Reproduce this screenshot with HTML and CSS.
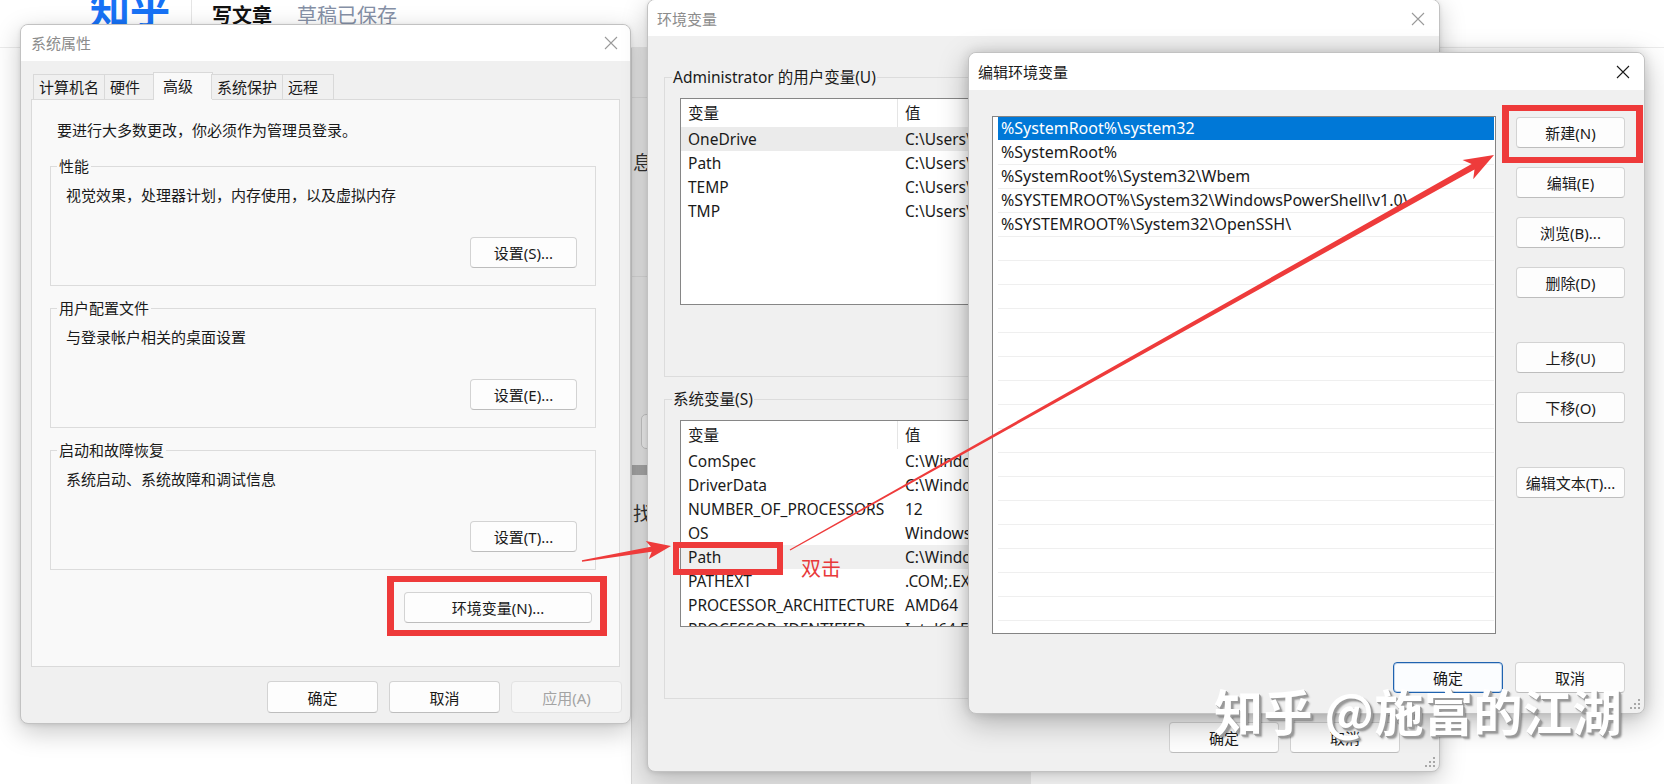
FILE: index.html
```html
<!DOCTYPE html>
<html lang="zh-CN">
<head>
<meta charset="utf-8">
<title>环境变量</title>
<link rel="stylesheet" href="styles.css">
</head>
<body>
<div class="zh-page">
  <header class="zh-header">
    <span class="zh-logo">知乎</span>
    <span class="zh-sep"></span>
    <span class="zh-title">写文章</span>
    <span class="zh-draft">草稿已保存</span>
  </header>
  <div class="zh-main">
    <div class="zh-side">
      <div class="zh-s1"></div>
      <div class="zh-s2">息</div>
      <div class="zh-s3"></div>
      <div class="zh-s4"></div>
      <div class="zh-s5"></div>
      <div class="zh-s6">找</div>
    </div>
  </div>
</div>

<section class="win win-sys">
  <div class="titlebar tb-sys">
    <span class="wt wt-off">系统属性</span>
    <svg class="xicon xicon-off" width="14" height="14" viewBox="0 0 14 14"><path d="M1 1L13 13M13 1L1 13" stroke="currentColor" stroke-width="1.1" fill="none"/></svg>
  </div>
  <div class="sys-body">
    <div class="tabs">
      <div class="tab tab-1">计算机名</div>
      <div class="tab">硬件</div>
      <div class="tab tab-on">高级</div>
      <div class="tab tab-4">系统保护</div>
      <div class="tab">远程</div>
    </div>
    <div class="tabpanel">
      <p class="intro">要进行大多数更改，你必须作为管理员登录。</p>
      <fieldset class="grp grp-first">
        <legend>性能</legend>
        <p class="grp-desc">视觉效果，处理器计划，内存使用，以及虚拟内存</p>
        <div class="grp-act"><button class="btn btn-set">设置(S)...</button></div>
      </fieldset>
      <fieldset class="grp">
        <legend>用户配置文件</legend>
        <p class="grp-desc">与登录帐户相关的桌面设置</p>
        <div class="grp-act"><button class="btn btn-set">设置(E)...</button></div>
      </fieldset>
      <fieldset class="grp">
        <legend>启动和故障恢复</legend>
        <p class="grp-desc">系统启动、系统故障和调试信息</p>
        <div class="grp-act"><button class="btn btn-set">设置(T)...</button></div>
      </fieldset>
      <div class="env-row"><button class="btn btn-env">环境变量(N)...</button></div>
    </div>
    <div class="sys-foot">
      <button class="btn btn-foot">确定</button>
      <button class="btn btn-foot">取消</button>
      <button class="btn btn-foot btn-dis">应用(A)</button>
    </div>
  </div>
</section>

<section class="win win-env">
  <div class="titlebar tb-env">
    <span class="wt wt-off">环境变量</span>
    <svg class="xicon xicon-off" width="14" height="14" viewBox="0 0 14 14"><path d="M1 1L13 13M13 1L1 13" stroke="currentColor" stroke-width="1.1" fill="none"/></svg>
  </div>
  <div class="env-body">
    <fieldset class="egrp">
      <legend>Administrator 的用户变量(U)</legend>
      <div class="lv">
        <div class="lv-head"><span>变量</span><span>值</span></div>
        <div class="lv-row lv-hl"><span>OneDrive</span><span>C:\Users\Administrator\OneDrive</span></div>
        <div class="lv-row"><span>Path</span><span>C:\Users\Administrator\AppData\Local\Microsoft\WindowsApps;</span></div>
        <div class="lv-row"><span>TEMP</span><span>C:\Users\Administrator\AppData\Local\Temp</span></div>
        <div class="lv-row"><span>TMP</span><span>C:\Users\Administrator\AppData\Local\Temp</span></div>
      </div>
    </fieldset>
    <fieldset class="egrp egrp-2">
      <legend>系统变量(S)</legend>
      <div class="lv">
        <div class="lv-head"><span>变量</span><span>值</span></div>
        <div class="lv-row"><span>ComSpec</span><span>C:\Windows\system32\cmd.exe</span></div>
        <div class="lv-row"><span>DriverData</span><span>C:\Windows\System32\Drivers\DriverData</span></div>
        <div class="lv-row"><span>NUMBER_OF_PROCESSORS</span><span>12</span></div>
        <div class="lv-row"><span>OS</span><span>Windows_NT</span></div>
        <div class="lv-row lv-hl2"><span>Path</span><span>C:\Windows\system32;C:\Windows;</span></div>
        <div class="lv-row"><span>PATHEXT</span><span>.COM;.EXE;.BAT;.CMD;.VBS</span></div>
        <div class="lv-row"><span>PROCESSOR_ARCHITECTURE</span><span>AMD64</span></div>
        <div class="lv-row"><span>PROCESSOR_IDENTIFIER</span><span>Intel64 Family 6 Model 151</span></div>
      </div>
    </fieldset>
    <div class="env-foot">
      <button class="btn btn-ef">确定</button>
      <button class="btn btn-ef">取消</button>
    </div>
  </div>
  <svg class="grip" width="10" height="10" viewBox="0 0 10 10"><g fill="#a8a8a8"><rect x="8" y="0" width="2" height="2"/><rect x="4" y="4" width="2" height="2"/><rect x="8" y="4" width="2" height="2"/><rect x="0" y="8" width="2" height="2"/><rect x="4" y="8" width="2" height="2"/><rect x="8" y="8" width="2" height="2"/></g></svg>
</section>

<section class="win win-edit">
  <div class="titlebar tb-edit">
    <span class="wt">编辑环境变量</span>
    <svg class="xicon" width="14" height="14" viewBox="0 0 14 14"><path d="M1 1L13 13M13 1L1 13" stroke="currentColor" stroke-width="1.1" fill="none"/></svg>
  </div>
  <div class="edit-body">
    <div class="edit-main">
      <div class="pl">
        <div class="pl-item pl-sel">%SystemRoot%\system32</div>
        <div class="pl-item">%SystemRoot%</div>
        <div class="pl-item">%SystemRoot%\System32\Wbem</div>
        <div class="pl-item">%SYSTEMROOT%\System32\WindowsPowerShell\v1.0\</div>
        <div class="pl-item">%SYSTEMROOT%\System32\OpenSSH\</div>
        <div class="pl-item"></div><div class="pl-item"></div><div class="pl-item"></div>
        <div class="pl-item"></div><div class="pl-item"></div><div class="pl-item"></div>
        <div class="pl-item"></div><div class="pl-item"></div><div class="pl-item"></div>
        <div class="pl-item"></div><div class="pl-item"></div><div class="pl-item"></div>
        <div class="pl-item"></div><div class="pl-item"></div><div class="pl-item"></div>
        <div class="pl-item"></div><div class="pl-item"></div>
      </div>
      <div class="edit-btns">
        <button class="btn btn-side">新建(N)</button>
        <button class="btn btn-side">编辑(E)</button>
        <button class="btn btn-side">浏览(B)...</button>
        <button class="btn btn-side">删除(D)</button>
        <button class="btn btn-side btn-gap">上移(U)</button>
        <button class="btn btn-side">下移(O)</button>
        <button class="btn btn-side btn-gap">编辑文本(T)...</button>
      </div>
    </div>
    <div class="edit-foot">
      <button class="btn btn-xf btn-default">确定</button>
      <button class="btn btn-xf">取消</button>
    </div>
  </div>
  <svg class="grip" width="10" height="10" viewBox="0 0 10 10"><g fill="#a8a8a8"><rect x="8" y="0" width="2" height="2"/><rect x="4" y="4" width="2" height="2"/><rect x="8" y="4" width="2" height="2"/><rect x="0" y="8" width="2" height="2"/><rect x="4" y="8" width="2" height="2"/><rect x="8" y="8" width="2" height="2"/></g></svg>
</section>

<svg class="annot" width="1664" height="784" viewBox="0 0 1664 784">
  <polygon fill="#ee3b3b" points="581.9,560.3 650.9,546.8 645.8,541.1 671,546 648.8,558.9 651.7,551.8 582.1,561.7"/>
  <polygon fill="#ee3b3b" points="789.7,549.5 1471.6,164.1 1462.5,160.1 1494,155 1473.2,179.3 1474.5,169.4 790.3,550.5"/>
</svg>
<div class="mark mark-env"></div>
<div class="mark mark-path"></div>
<div class="mark mark-new"></div>
<div class="dbl">双击</div>
<div class="watermark">知乎 @施富的江湖</div>
</body>
</html>
```

FILE: styles.css
```css
* { box-sizing: border-box; }
html, body { margin: 0; padding: 0; }
body {
  width: 1664px;
  height: 784px;
  overflow: hidden;
  position: relative;
  background: #ffffff;
  font-family: "Noto Sans", "Noto Sans CJK SC", sans-serif;
  color: #1a1a1a;
}

/* background zhihu page */
.zh-header {
  height: 48px;
  border-bottom: 1px solid #ebebeb;
  display: flex;
  align-items: flex-start;
  padding-left: 90px;
  overflow: hidden;
}
.zh-logo {
  font-family: "Noto Sans CJK SC", sans-serif;
  font-size: 40px;
  font-weight: 700;
  line-height: 40px;
  color: #1772f6;
  margin-top: -13px;
}
.zh-sep { width: 1px; height: 32px; background: #e5e5e5; margin-left: 21px; }
.zh-title {
  font-family: "Noto Sans CJK SC", sans-serif;
  font-size: 20px; font-weight: 700; line-height: 22px;
  margin: 4px 0 0 20px; color: #121212;
}
.zh-draft {
  font-family: "Noto Sans CJK SC", sans-serif;
  font-size: 20px; line-height: 22px;
  margin: 4px 0 0 25px; color: #8590a6;
}
.zh-main { padding-left: 631px; }
.zh-side { width: 400px; height: 736px; background: #ebebeb; border-left: 1px solid #d6d6d6; }
.zh-s1 { height: 50px; border-bottom: 1px solid #dcdcdc; }
.zh-s2 { margin-top: 54px; font-size: 19px; line-height: 22px; padding-left: 1px; color: #333; }
.zh-s3 { height: 103px; border-bottom: 1px solid #dcdcdc; }
.zh-s4 { margin: 137px 0 0 9px; height: 35px; border: 1px solid #c9c9c9; border-radius: 5px; background: #f4f4f4; }
.zh-s5 { margin-top: 16px; height: 10px; background: #a9a9a9; }
.zh-s6 { margin-top: 28px; font-size: 19px; line-height: 22px; padding-left: 1px; color: #333; }

/* windows */
.win {
  position: absolute;
  background: #f0f0f0;
  border: 1px solid #c2c2c2;
  border-radius: 8px;
  box-shadow: 0 8px 26px rgba(0, 0, 0, 0.22), 0 1px 4px rgba(0, 0, 0, 0.1);
  overflow: hidden;
  display: flex;
  flex-direction: column;
  font-size: 15px;
}
.titlebar {
  background: #ffffff;
  display: flex;
  align-items: center;
  justify-content: space-between;
  flex: none;
}
.wt { font-size: 15px; line-height: 20px; color: #1a1a1a; }
.wt-off { color: #8c8c8c; }
.xicon { color: #1a1a1a; display: block; }
.xicon-off { color: #9a9a9a; }

.btn {
  font: inherit;
  font-size: 15px;
  color: #1a1a1a;
  background: #fdfdfd;
  border: 1px solid #d3d3d3;
  border-bottom-color: #bdbdbd;
  border-radius: 4px;
  padding: 0;
  height: 31px;
  display: inline-flex;
  align-items: center;
  justify-content: center;
  white-space: nowrap;
}

/* system properties */
.win-sys { left: 20px; top: 24px; width: 611px; height: 700px; }
.tb-sys { height: 36px; padding: 0 12px 0 10px; }
.sys-body { padding: 0 10px 10px 10px; display: flex; flex-direction: column; }
.tabs {
  display: flex;
  align-items: flex-end;
  height: 28px;
  margin-top: 11px;
  margin-bottom: -1px;
  padding-left: 2px;
  position: relative;
  z-index: 1;
}
.tab {
  height: 25px;
  margin-bottom: 1px;
  min-width: 52px;
  padding: 0 5px;
  border: 1px solid #d9d9d9;
  border-bottom: none;
  background: #f0f0f0;
  line-height: 24px;
  font-size: 15px;
  margin-left: -1px;
}
.tab-1 { margin-left: 0; }
.tab-on {
  height: 28px;
  margin-bottom: 0;
  min-width: 60px;
  padding-left: 9px;
  margin-left: -3px;
  margin-right: -1px;
  background: #f9f9f9;
  line-height: 26px;
}
.tabpanel {
  height: 568px;
  background: #f9f9f9;
  border: 1px solid #dadada;
  padding: 20px 23px 0 18px;
}
.intro { margin: 0 0 0 7px; line-height: 20px; font-size: 15px; }
.grp {
  margin: 12px 0 0 0;
  border: 1px solid #dcdcdc;
  padding: 9px 18px 17px 15px;
  min-width: 0;
}
.grp-first { margin-top: 16px; }
.grp legend { padding: 0 2px; margin-left: -9px; line-height: 20px; font-size: 15px; }
.grp-desc { margin: 0; line-height: 20px; }
.grp-act { display: flex; justify-content: flex-end; margin-top: 32px; }
.btn-set { width: 107px; }
.env-row { display: flex; justify-content: flex-end; margin: 22px 4px 0 0; }
.btn-env { width: 188px; }
.sys-foot { display: flex; justify-content: flex-end; gap: 11px; margin: 14px -2px 0 0; }
.btn-foot { width: 111px; height: 32px; }
.btn-dis { color: #a3a3a3; background: #f6f6f6; border-color: #e3e3e3; }

/* environment variables */
.win-env { left: 647px; top: -1px; width: 793px; height: 773px; }
.tb-env { height: 36px; padding: 1px 14px 0 9px; }
.env-body { padding: 31px 0 0 16px; display: flex; flex-direction: column; }
.egrp {
  width: 760px;
  margin: 0;
  border: 1px solid #dcdcdc;
  padding: 11px 16px 71px 15px;
  min-width: 0;
}
.egrp-2 { margin-top: 12px; }
.egrp legend { padding: 0 1px; margin-left: -8px; line-height: 20px; font-size: 15.5px; }
.lv {
  height: 207px;
  background: #ffffff;
  border: 1px solid #868686;
  overflow: hidden;
  font-size: 15.5px;
}
.lv-head, .lv-row { display: grid; grid-template-columns: 217px 1fr; }
.lv-head { height: 28px; line-height: 28px; }
.lv-head span:first-child { border-right: 1px solid #e5e5e5; }
.lv-row { height: 24px; line-height: 24px; }
.lv-head span, .lv-row span { padding-left: 7px; white-space: nowrap; overflow: hidden; }
.lv-hl { background: #ebebeb; }
.lv-hl2 { background: #efefef; }
.env-foot { display: flex; justify-content: flex-end; gap: 11px; margin-top: 23px; padding-right: 39px; }
.btn-ef { width: 110px; }
.grip { position: absolute; right: 4px; bottom: 4px; }

/* edit environment variable */
.win-edit { left: 968px; top: 52px; width: 677px; height: 662px; box-shadow: 0 8px 30px rgba(0,0,0,0.28), 0 0 12px rgba(0,0,0,0.12); }
.tb-edit { height: 37px; padding: 0 14px 0 9px; }
.edit-body { padding: 26px 19px 20px 23px; display: flex; flex-direction: column; }
.edit-main { display: flex; align-items: flex-start; }
.pl {
  width: 504px;
  height: 518px;
  background: #ffffff;
  border: 1px solid #848484;
  padding: 0 1px 0 5px;
  overflow: hidden;
  font-size: 16px;
}
.pl-item {
  height: 24px;
  line-height: 23px;
  padding-left: 3px;
  border-bottom: 1px solid #efefef;
  white-space: nowrap;
  overflow: hidden;
}
.pl-sel { background: #0078d7; color: #ffffff; border-bottom-color: #ffffff; }
.edit-btns { display: flex; flex-direction: column; gap: 19px; margin: 1px 0 0 20px; width: 109px; }
.btn-side { width: 109px; }
.btn-gap { margin-top: 25px; }
.edit-foot { display: flex; justify-content: flex-end; gap: 12px; margin-top: 28px; }
.btn-xf { width: 110px; }
.btn-default { border: 1px solid #1f63b0; box-shadow: inset 0 0 0 1px rgba(31, 99, 176, 0.25); background: #fbfdff; }

/* annotations */
.annot { position: absolute; left: 0; top: 0; pointer-events: none; }
.mark { position: absolute; border: 6px solid #ee3a3a; }
.mark-env { left: 387px; top: 576px; width: 220px; height: 60px; border-left-width: 7px; border-right-width: 7px; }
.mark-path { left: 673px; top: 542px; width: 110px; height: 33px; }
.mark-new { left: 1502px; top: 105px; width: 141px; height: 58px; border-left-width: 7px; border-right-width: 7px; }
.dbl {
  position: absolute; left: 801px; top: 556px;
  font-family: "Noto Sans CJK SC", sans-serif;
  font-size: 20px; line-height: 24px; color: #e8393a;
}
.watermark {
  position: absolute; left: 1214px; top: 685px;
  font-family: "Noto Sans CJK SC", sans-serif;
  font-size: 49px; line-height: 50px; font-weight: 700;
  letter-spacing: 0.5px;
  color: #ffffff;
  white-space: nowrap;
  text-shadow: 1px 1px 0 #9a9a9a, 2px 2px 0 #9a9a9a, 3px 3px 2px rgba(0, 0, 0, 0.35);
}
```
